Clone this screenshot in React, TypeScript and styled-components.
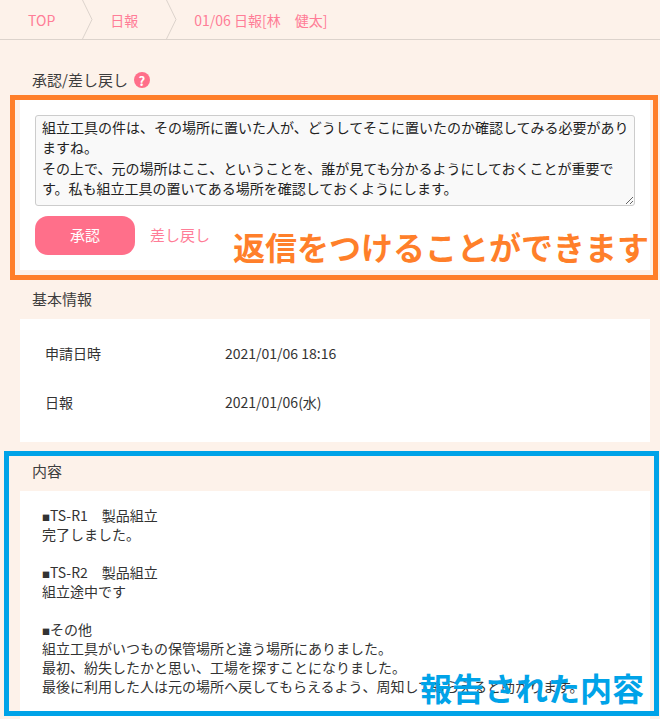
import * as React from 'react';
import styled, { createGlobalStyle } from 'styled-components';

const GlobalStyle = createGlobalStyle`
  html, body {
    margin: 0;
    padding: 0;
    height: 719px;
    overflow: hidden;
    background-color: #fdf2ea;
  }
  body, textarea, button {
    font-family: "Noto Sans CJK JP", "Noto Sans", sans-serif;
    font-size: 14px;
    color: #333;
  }
`;

const Page = styled.div`
  position: relative;
  width: 660px;
  height: 719px;
  overflow: hidden;
`;

const Breadcrumb = styled.nav`
  display: flex;
  align-items: stretch;
  height: 39px;
  border-bottom: 1px solid #dcd3cc;
`;

const Crumb = styled.a<{ $left: number; $right: number }>`
  display: flex;
  align-items: center;
  color: #ff7d97;
  font-size: 14px;
  padding-left: ${props => props.$left}px;
  padding-right: ${props => props.$right}px;
`;

const Chevron = styled.svg`
  display: block;
  width: 11px;
  height: 39px;
  flex: none;
  margin-left: -1px;
`;

const Section = styled.section`
  padding: 0 10px 0 20px;
`;

const SectionTitle = styled.h2<{ $top: number; $bottom: number }>`
  display: flex;
  align-items: center;
  gap: 6px;
  margin: 0;
  padding: ${props => props.$top}px 0 ${props => props.$bottom}px 12px;
  font-size: 15px;
  font-weight: 400;
  line-height: 20px;
  color: #3d3d3d;
`;

const HelpIcon = styled.span`
  display: inline-flex;
  align-items: center;
  justify-content: center;
  width: 16px;
  height: 16px;
  border-radius: 50%;
  background-color: #ff6f8a;
  color: #fff;
  font-size: 13px;
  font-weight: 700;
  line-height: 1;
`;

const Card = styled.div`
  background-color: #fff;
`;

const ApprovalCard = styled(Card)`
  padding: 15px;
  height: 170px;
  box-sizing: border-box;
`;

const Comment = styled.textarea`
  display: block;
  box-sizing: border-box;
  width: 600px;
  height: 91px;
  margin: 0;
  padding: 1px 4px 2px 6px;
  border: 1px solid #ccc;
  border-radius: 3px;
  background-color: #f9f9f9;
  color: #222;
  line-height: 20.3px;
  overflow: hidden;
`;

const Actions = styled.div`
  display: flex;
  align-items: center;
  gap: 15px;
  margin-top: 10px;
`;

const ApproveButton = styled.button`
  width: 100px;
  height: 39px;
  padding: 0 0 3px;
  border: none;
  border-radius: 13px;
  background-color: #ff6f8a;
  color: #fff;
  font-size: 15px;
`;

const RejectLink = styled.a`
  padding-bottom: 2px;
  color: #ff7d97;
  font-size: 15px;
`;

const InfoCard = styled(Card)`
  padding: 9px 25px 14px;
  height: 123px;
  box-sizing: border-box;
`;

const InfoRow = styled.div`
  display: flex;
  align-items: center;
  height: 49px;
`;

const InfoLabel = styled.div`
  width: 180px;
  color: #333;
`;

const InfoValue = styled.div`
  color: #333;
`;

const BodyCard = styled(Card)`
  padding: 15px 22px 30px;
  line-height: 19px;
  white-space: pre-wrap;
  color: #333;
`;

const Marker = styled.span`
  font-size: 8px;
  line-height: 1;
`;

const Frame = styled.div<{ $color: string; $x: number; $y: number; $w: number; $h: number }>`
  position: absolute;
  box-sizing: border-box;
  left: ${props => props.$x}px;
  top: ${props => props.$y}px;
  width: ${props => props.$w}px;
  height: ${props => props.$h}px;
  border: 5px solid ${props => props.$color};
  pointer-events: none;
`;

const Callout = styled.div<{ $color: string; $x: number; $y: number }>`
  position: absolute;
  left: ${props => props.$x}px;
  top: ${props => props.$y}px;
  color: ${props => props.$color};
  font-size: 32px;
  font-weight: 700;
  line-height: 40px;
  white-space: nowrap;
`;

const ORANGE = '#ff7f2a';
const BLUE = '#00a3e8';

const comment = `組立工具の件は、その場所に置いた人が、どうしてそこに置いたのか確認してみる必要がありますね。
その上で、元の場所はここ、ということを、誰が見ても分かるようにしておくことが重要です。私も組立工具の置いてある場所を確認しておくようにします。`;

const CrumbChevron = () => (
  <Chevron viewBox="0 0 11 39">
    <path d="M0.5 0 L10 19.5 L0.5 39" fill="none" stroke="#dcd3cc" strokeWidth="1" />
  </Chevron>
);

export default function App() {
  return (
    <Page>
      <GlobalStyle />
      <Breadcrumb>
        <Crumb $left={28} $right={28}>TOP</Crumb>
        <CrumbChevron />
        <Crumb $left={17} $right={29}>日報</Crumb>
        <CrumbChevron />
        <Crumb $left={17} $right={0}>01/06 日報[林　健太]</Crumb>
      </Breadcrumb>

      <Section>
        <SectionTitle $top={30} $bottom={10}>
          承認/差し戻し
          <HelpIcon>?</HelpIcon>
        </SectionTitle>
        <ApprovalCard>
          <Comment defaultValue={comment} />
          <Actions>
            <ApproveButton>承認</ApproveButton>
            <RejectLink>差し戻し</RejectLink>
          </Actions>
        </ApprovalCard>
      </Section>

      <Section>
        <SectionTitle $top={19} $bottom={10}>基本情報</SectionTitle>
        <InfoCard>
          <InfoRow>
            <InfoLabel>申請日時</InfoLabel>
            <InfoValue>2021/01/06 18:16</InfoValue>
          </InfoRow>
          <InfoRow>
            <InfoLabel>日報</InfoLabel>
            <InfoValue>2021/01/06(水)</InfoValue>
          </InfoRow>
        </InfoCard>
      </Section>

      <Section>
        <SectionTitle $top={19} $bottom={10}>内容</SectionTitle>
        <BodyCard>
          <Marker>■</Marker>TS-R1　製品組立{'\n'}
          完了しました。{'\n\n'}
          <Marker>■</Marker>TS-R2　製品組立{'\n'}
          組立途中です{'\n\n'}
          <Marker>■</Marker>その他{'\n'}
          組立工具がいつもの保管場所と違う場所にありました。{'\n'}
          最初、紛失したかと思い、工場を探すことになりました。{'\n'}
          最後に利用した人は元の場所へ戻してもらえるよう、周知してもらえると助かります。
        </BodyCard>
      </Section>

      <Frame $color={ORANGE} $x={10} $y={95} $w={648} $h={185} />
      <Callout $color={ORANGE} $x={233} $y={226}>返信をつけることができます</Callout>
      <Frame $color={BLUE} $x={4} $y={451} $w={655} $h={265} />
      <Callout $color={BLUE} $x={420} $y={667}>報告された内容</Callout>
    </Page>
  );
}
